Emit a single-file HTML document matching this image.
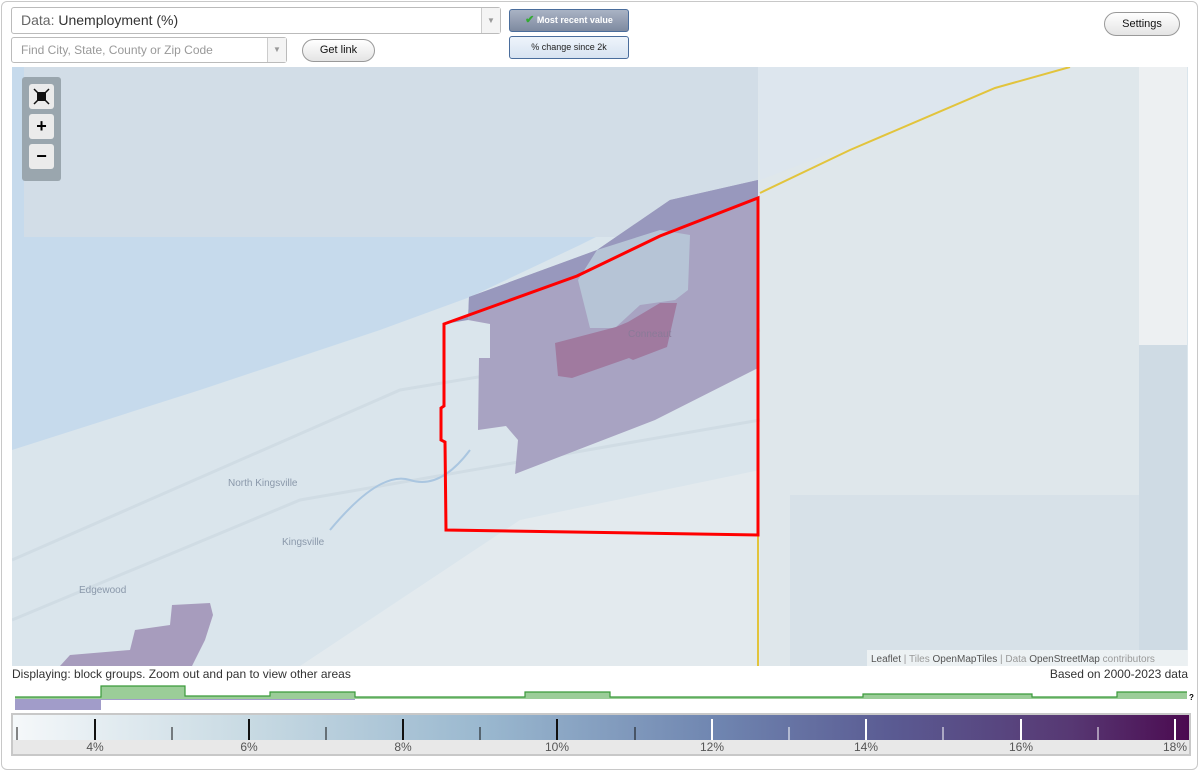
<!DOCTYPE html>
<html><head><meta charset="utf-8"><style>
body{margin:0;width:1200px;height:771px;background:#fff;font-family:"Liberation Sans",sans-serif;overflow:hidden;position:relative}
.frame{position:absolute;left:1px;top:1px;width:1195px;height:767px;border:1px solid #c8c8c8;border-radius:6px}
.sel{position:absolute;background:#fff;border:1px solid #bbb;border-radius:3px;box-sizing:border-box}
.arr{position:absolute;right:0;top:0;bottom:0;width:18px;border-left:1px solid #ccc;background:#f4f4f4;color:#999;font-size:8px;text-align:center}
.btn{position:absolute;border:1px solid #999;border-radius:12px;background:linear-gradient(#fff,#e4e4e4);font-size:11px;text-align:center;box-sizing:border-box;color:#111}
.tb{position:absolute;border:1px solid #4a6d9c;border-radius:3px;font-size:9px;text-align:center;box-sizing:border-box}
.zb{position:absolute;left:29px;width:25px;height:25px;background:#ebebeb;border-radius:3px;text-align:center;font-weight:bold;font-size:18px;line-height:25px}
</style></head><body>
<div class="frame"></div>
<div class="sel" style="left:11px;top:7px;width:490px;height:27px;font-size:14px;line-height:25px;padding-left:9px;color:#333"><span style="color:#666">Data:</span> Unemployment (%)<div class="arr" style="line-height:25px">▼</div></div>
<div class="sel" style="left:11px;top:37px;width:276px;height:26px;font-size:12px;line-height:24px;padding-left:9px;color:#999">Find City, State, County or Zip Code<div class="arr" style="line-height:24px">▼</div></div>
<div class="btn" style="left:302px;top:39px;width:73px;height:23px;line-height:21px">Get link</div>
<div class="tb" style="left:509px;top:9px;width:120px;height:23px;background:linear-gradient(#a9b3c4,#7e8aa0);color:#fff;font-weight:bold;line-height:21px"><span style="color:#3a3;font-size:11px">✔</span> Most recent value</div>
<div class="tb" style="left:509px;top:36px;width:120px;height:23px;background:linear-gradient(#eef4fb,#d7e3f1);color:#222;line-height:21px">% change since 2k</div>
<div class="btn" style="left:1104px;top:12px;width:76px;height:24px;line-height:22px">Settings</div>

<svg style="position:absolute;left:12px;top:67px" width="1176" height="599" viewBox="12 67 1176 599">
<rect x="12" y="67" width="1176" height="599" fill="#dae5ec"/>
<polygon points="12,67 1070,67 995,90 760,180 670,200 580,245 470,297 380,330 200,390 12,450" fill="#c6daec"/>
<rect x="24" y="67" width="734" height="170" fill="#d2dde7"/>
<polygon points="758,67 1139,67 1139,345 1187,345 1187,666 758,666" fill="#dfe7eb"/>
<polygon points="758,67 1070,67 995,90 760,180" fill="#dde6ee"/>
<rect x="1139" y="67" width="48" height="278" fill="#edf0f2"/>
<rect x="1139" y="345" width="48" height="321" fill="#cfdbe4"/>
<rect x="790" y="495" width="349" height="171" fill="#d7e1e8"/>
<polygon points="300,666 520,520 760,470 760,666" fill="#e3eaee"/>
<path d="M12,560 L400,390 L760,330 M12,620 L300,500 L760,420" stroke="#d0dce4" stroke-width="3" fill="none"/>
<path d="M330,530 Q380,470 410,480 T470,450" stroke="#aac6e0" stroke-width="2" fill="none"/>
<polyline points="760,193 850,150 995,88 1070,67" fill="none" stroke="#e2c43c" stroke-width="2"/>
<line x1="758" y1="535" x2="758" y2="666" stroke="#e2c43c" stroke-width="2"/>
<polygon points="469,297 597,250 670,200 758,180 758,368 655,420 515,474 518,440 506,426 478,430 479,358 490,358 490,324 468,320" fill="#a8a3c2"/>
<polygon points="469,297 597,250 670,200 758,180 758,198 660,236 577,276 444,324 468,320" fill="#9898bd"/>
<polygon points="578,280 597,250 660,230 690,235 688,290 675,300 640,305 615,328 590,328" fill="#b6c4d6"/>
<polygon points="555,343 616,327 628,322 660,303 677,303 667,347 633,360 629,358 572,378 558,376" fill="#a07a9f"/>
<polygon points="60,666 70,655 130,650 135,630 170,625 172,605 210,603 213,615 205,640 192,666" fill="#a79cbd"/>
<polygon points="444,324 577,276 660,236 758,198 758,535 446,530 445,442 441,440 441,408 444,406" fill="none" stroke="#f00" stroke-width="3"/>
<g font-family="Liberation Sans,sans-serif" font-size="10" fill="#8a98aa">
<text x="228" y="486">North Kingsville</text><text x="282" y="545">Kingsville</text><text x="79" y="593">Edgewood</text><text x="628" y="337" fill="#8a7a98">Conneaut</text></g>
<rect x="867" y="650" width="321" height="16" fill="#f0f3f5" opacity=".85"/>
<text x="871" y="662" font-family="Liberation Sans,sans-serif" font-size="10" fill="#999"><tspan fill="#555">Leaflet</tspan> | Tiles <tspan fill="#555">OpenMapTiles</tspan> | Data <tspan fill="#555">OpenStreetMap</tspan> contributors</text>
</svg>
<div style="position:absolute;left:22px;top:77px;width:39px;height:104px;background:#9aa6ae;border-radius:3px"></div>
<div class="zb" style="top:84px"><svg width="25" height="25"><rect x="8" y="8" width="9" height="9" fill="#111"/><path d="M5,5 l4,4 M20,5 l-4,4 M5,20 l4,-4 M20,20 l-4,-4" stroke="#111" stroke-width="1.5"/></svg></div>
<div class="zb" style="top:114px">+</div>
<div class="zb" style="top:144px">−</div>

<div style="position:absolute;left:12px;top:667px;font-size:12px;color:#333">Displaying: block groups. Zoom out and pan to view other areas</div>
<div style="position:absolute;right:12px;top:667px;font-size:12px;color:#333">Based on 2000-2023 data</div>
<svg style="position:absolute;left:0;top:680px" width="1200" height="32">
<rect x="15" y="18" width="86" height="12" fill="#a19cc9"/>
<rect x="101" y="17" width="254" height="3" fill="#a19cc9"/>
<polygon points="15,17 101,17 101,6 185,6 185,16 270,16 270,12 355,12 355,17 525,17 525,12 610,12 610,17 863,17 863,14 1032,14 1032,17 1117,17 1117,12 1187,12 1187,19 15,19" fill="#9bcd98"/>
<polyline points="15,17 101,17 101,6 185,6 185,16 270,16 270,12 355,12 355,17 525,17 525,12 610,12 610,17 863,17 863,14 1032,14 1032,17 1117,17 1117,12 1187,12" fill="none" stroke="#3a9a3a" stroke-width="1.2"/>
<text x="1189" y="20" font-size="8" font-weight="bold" font-family="Liberation Sans">?</text>
</svg>
<div style="position:absolute;left:11px;top:713px;width:1180px;height:43px;border:2px solid #c8c8c8;box-sizing:border-box;background:#e8e8e8"></div>
<svg style="position:absolute;left:13px;top:715px" width="1176" height="39">
<defs><linearGradient id="g"><stop offset="0" stop-color="#f5f8fa"/><stop offset=".2" stop-color="#c8dae3"/><stop offset=".4" stop-color="#9ab8cf"/><stop offset=".6" stop-color="#6f85b0"/><stop offset=".75" stop-color="#5a5a92"/><stop offset=".9" stop-color="#573873"/><stop offset="1" stop-color="#4b0a50"/></linearGradient></defs>
<rect width="1176" height="25" fill="url(#g)"/>
<g stroke="#111" stroke-width="2"><line x1="82" y1="4" x2="82" y2="25"/><line x1="236" y1="4" x2="236" y2="25"/><line x1="390" y1="4" x2="390" y2="25"/><line x1="544" y1="4" x2="544" y2="25"/></g>
<g stroke="#111" stroke-width="1"><line x1="4" y1="12" x2="4" y2="25"/><line x1="159" y1="12" x2="159" y2="25"/><line x1="313" y1="12" x2="313" y2="25"/><line x1="467" y1="12" x2="467" y2="25"/><line x1="622" y1="12" x2="622" y2="25"/></g>
<g stroke="#fff" stroke-width="2"><line x1="699" y1="4" x2="699" y2="25"/><line x1="853" y1="4" x2="853" y2="25"/><line x1="1008" y1="4" x2="1008" y2="25"/><line x1="1162" y1="4" x2="1162" y2="25"/></g>
<g stroke="#fff" stroke-width="1"><line x1="776" y1="12" x2="776" y2="25"/><line x1="930" y1="12" x2="930" y2="25"/><line x1="1085" y1="12" x2="1085" y2="25"/></g>
<g font-family="Liberation Sans" font-size="12" fill="#555" text-anchor="middle"><text x="82" y="36">4%</text><text x="236" y="36">6%</text><text x="390" y="36">8%</text><text x="544" y="36">10%</text><text x="699" y="36">12%</text><text x="853" y="36">14%</text><text x="1008" y="36">16%</text><text x="1162" y="36">18%</text></g>
</svg>
</body></html>
